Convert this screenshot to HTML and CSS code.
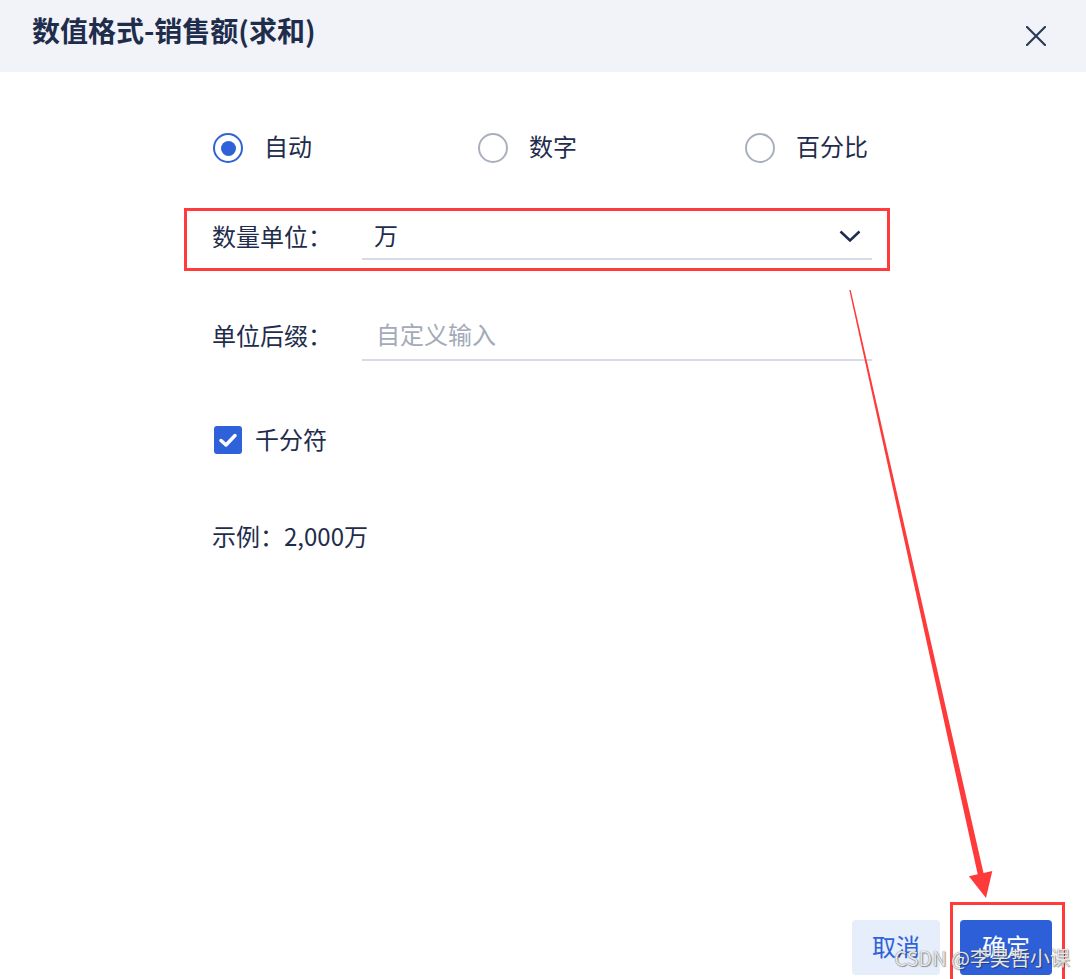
FILE: index.html
```html
<!DOCTYPE html>
<html lang="zh-CN">
<head>
<meta charset="utf-8">
<title>数值格式</title>
<link rel="stylesheet" href="styles.css">
</head>
<body>
<div class="dialog">
  <header class="dialog-header">
    <h1 class="dialog-title">数值格式-销售额(求和)</h1>
    <button class="close-btn" aria-label="关闭">
      <svg width="20" height="20" viewBox="0 0 20 20"><path d="M1 1 L19 19 M19 1 L1 19" stroke="#2b3a55" stroke-width="2.2" stroke-linecap="round" fill="none"/></svg>
    </button>
  </header>
  <main class="dialog-body">
    <div class="form">
      <div class="radio-group">
        <label class="radio checked"><span class="radio-circle"></span><span class="radio-text">自动</span></label>
        <label class="radio"><span class="radio-circle"></span><span class="radio-text">数字</span></label>
        <label class="radio"><span class="radio-circle"></span><span class="radio-text">百分比</span></label>
      </div>
      <div class="highlight">
        <div class="field-row">
          <span class="field-label">数量单位：</span>
          <div class="select">
            <span class="select-value">万</span>
            <svg width="22" height="12" viewBox="0 0 22 12"><path d="M1.5 1.5 L11 10.5 L20.5 1.5" stroke="#1f2d4d" stroke-width="2.5" fill="none" stroke-linejoin="miter"/></svg>
          </div>
        </div>
      </div>
      <div class="field-row input-row">
        <span class="field-label">单位后缀：</span>
        <div class="input"><span class="placeholder">自定义输入</span></div>
      </div>
      <label class="checkbox">
        <span class="checkbox-box">
          <svg width="28" height="28" viewBox="0 0 28 28"><path d="M7 14.5 L12 19 L21 9.5" stroke="#fff" stroke-width="3.5" fill="none" stroke-linecap="round" stroke-linejoin="round"/></svg>
        </span>
        <span class="checkbox-text">千分符</span>
      </label>
      <p class="example">示例：2,000万</p>
    </div>
  </main>
  <footer class="dialog-footer">
    <button class="btn btn-cancel">取消</button>
    <div class="highlight-btn"><button class="btn btn-primary">确定</button></div>
  </footer>
  <svg class="arrow" width="1086" height="979" viewBox="0 0 1086 979">
    <polygon points="849.3,290.1 850.7,289.9 983.5,873 992.3,871 986,898 968.9,876.2 977.7,874.3" fill="#ff3a3a"/>
  </svg>
  <div class="watermark">CSDN @李昊哲小课</div>
</div>
</body>
</html>
```

FILE: styles.css
```css
html, body {
  margin: 0;
  padding: 0;
}

body {
  font-family: "Noto Sans CJK SC", "Noto Sans", sans-serif;
  color: #1f2d4d;
  background: #fff;
}

.dialog {
  position: relative;
  height: 979px;
  display: flex;
  flex-direction: column;
  overflow: hidden;
  background: #fff;
}

.dialog-header {
  height: 72px;
  flex: none;
  box-sizing: border-box;
  background: #f1f3f8;
  display: flex;
  align-items: center;
  justify-content: space-between;
  padding: 0 40px 12px 32px;
}

.dialog-title {
  margin: 0;
  font-size: 28px;
  font-weight: 700;
  line-height: 1;
  color: #1f2d4d;
}

.close-btn {
  border: none;
  background: none;
  padding: 0;
  width: 20px;
  height: 20px;
  display: flex;
  margin-top: 12px;
}

.dialog-body {
  flex: 1;
  padding-top: 61px;
}

.form {
  margin-left: 212px;
  width: 660px;
}

.radio-group {
  display: grid;
  grid-template-columns: 265px 267px auto;
  margin-left: 1px;
}

.radio {
  display: flex;
  align-items: center;
  gap: 21px;
  font-size: 24px;
  height: 30px;
  line-height: 30px;
}

.radio-text {
  padding-bottom: 4px;
}

.radio-circle {
  width: 30px;
  height: 30px;
  box-sizing: border-box;
  border: 2px solid #a9b0bd;
  border-radius: 50%;
  display: flex;
  align-items: center;
  justify-content: center;
}

.radio.checked .radio-circle {
  border: 2.5px solid #2f62d9;
}

.radio.checked .radio-circle::after {
  content: "";
  width: 15px;
  height: 15px;
  border-radius: 50%;
  background: #2f62d9;
}

.highlight {
  margin: 45px -18px 0 -28px;
  border: 3px solid #ff3b3b;
  padding: 2px 15px 8px 25px;
}

.field-row {
  display: flex;
  height: 47px;
}

.field-label {
  width: 150px;
  flex: none;
  display: flex;
  align-items: center;
  font-size: 24px;
  padding-bottom: 2px;
}

.select,
.input {
  flex: 1;
  border-bottom: 2px solid #d8dbe3;
  display: flex;
  align-items: center;
  font-size: 24px;
  padding-bottom: 2px;
}

.select {
  justify-content: space-between;
  padding: 0 11px 2px 12px;
}

.select svg {
  margin-top: 2px;
}

.input {
  padding-left: 14px;
  padding-bottom: 6px;
}

.placeholder {
  color: #a3aab8;
}

.input-row {
  margin-top: 43px;
}

.input-row .field-label {
  padding-bottom: 6px;
}

.checkbox {
  margin-top: 65px;
  margin-left: 2px;
  display: flex;
  align-items: center;
  gap: 13px;
  font-size: 24px;
  height: 28px;
}

.checkbox-text {
  padding-bottom: 3px;
}

.checkbox-box {
  width: 28px;
  height: 28px;
  border-radius: 3px;
  background: #2f62d9;
  display: flex;
}

.example {
  margin: 67px 0 0;
  font-size: 24px;
  line-height: 30px;
}

.dialog-footer {
  flex: none;
  display: flex;
  justify-content: flex-end;
  align-items: flex-end;
  gap: 10px;
  padding-right: 21px;
}

.btn {
  height: 55px;
  border: none;
  border-radius: 4px;
  font-family: "Noto Sans CJK SC", sans-serif;
  font-size: 24px;
  padding: 0 0 4px;
}

.btn-cancel {
  width: 88px;
  margin-bottom: 4px;
  background: #e6edfb;
  color: #2f62d9;
}

.highlight-btn {
  border: 3px solid #ff3b3b;
  padding: 15px 10px 4px 7px;
  margin-bottom: -3px;
  display: flex;
}

.btn-primary {
  width: 92px;
  background: #2d5fd8;
  color: #fff;
}

.arrow {
  position: absolute;
  left: 0;
  top: 0;
  pointer-events: none;
}

.watermark {
  position: absolute;
  right: 16px;
  bottom: 9px;
  font-size: 20px;
  line-height: 24px;
  color: rgba(255, 255, 255, 0.85);
  text-shadow: 0 0 1px #555, 1px 1px 1px rgba(0, 0, 0, 0.35);
  pointer-events: none;
}
```
